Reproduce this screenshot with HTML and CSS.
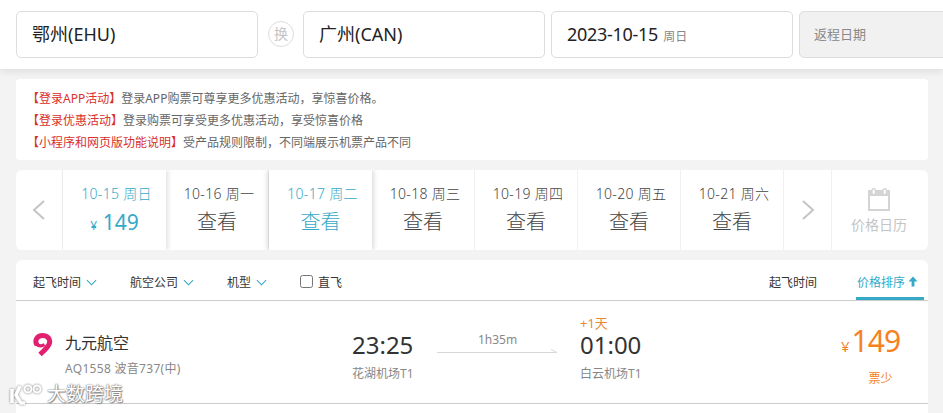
FILE: index.html
```html
<!DOCTYPE html>
<html lang="zh-CN">
<head>
    <meta charset="UTF-8">
    <title>机票查询</title>
    <link rel="stylesheet" href="styles.css">
</head>
<body>
    <header class="search-bar">
        <div class="field field-city">鄂州(EHU)</div>
        <div class="swap">换</div>
        <div class="field field-city">广州(CAN)</div>
        <div class="field field-date">2023-10-15 <span class="weekday">周日</span></div>
        <div class="field field-return">返程日期</div>
    </header>

    <main class="content">
        <section class="notice">
            <p><span class="notice-tag">【登录APP活动】</span>登录APP购票可尊享更多优惠活动，享惊喜价格。</p>
            <p><span class="notice-tag">【登录优惠活动】</span>登录购票可享受更多优惠活动，享受惊喜价格</p>
            <p><span class="notice-tag">【小程序和网页版功能说明】</span>受产品规则限制，不同端展示机票产品不同</p>
        </section>

        <section class="date-strip">
            <div class="arrow">
                <svg width="14" height="20" viewBox="0 0 14 20"><path d="M12 1 L2 10 L12 19" fill="none" stroke="#c4c4c4" stroke-width="2"/></svg>
            </div>
            <div class="day day-active"><div class="day-date">10-15 周日</div><div class="day-price"><small>¥</small> 149</div></div>
            <div class="day"><div class="day-date">10-16 周一</div><div class="day-look">查看</div></div>
            <div class="day day-active day-raised"><div class="day-date">10-17 周二</div><div class="day-look">查看</div></div>
            <div class="day"><div class="day-date">10-18 周三</div><div class="day-look">查看</div></div>
            <div class="day"><div class="day-date">10-19 周四</div><div class="day-look">查看</div></div>
            <div class="day"><div class="day-date">10-20 周五</div><div class="day-look">查看</div></div>
            <div class="day"><div class="day-date">10-21 周六</div><div class="day-look">查看</div></div>
            <div class="arrow arrow-next">
                <svg width="14" height="20" viewBox="0 0 14 20"><path d="M2 1 L12 10 L2 19" fill="none" stroke="#c4c4c4" stroke-width="2"/></svg>
            </div>
            <div class="calendar">
                <svg width="22" height="23" viewBox="0 0 22 23">
                    <rect x="1" y="3" width="20" height="19" fill="none" stroke="#d4d4d4" stroke-width="2"/>
                    <rect x="0" y="2" width="22" height="6" fill="#d4d4d4"/>
                    <rect x="4" y="0.8" width="3.4" height="6" rx="1.7" fill="#ffffff" stroke="#d4d4d4" stroke-width="1.4"/>
                    <rect x="15" y="0.8" width="3.4" height="6" rx="1.7" fill="#ffffff" stroke="#d4d4d4" stroke-width="1.4"/>
                </svg>
                <span>价格日历</span>
            </div>
        </section>

        <section class="results">
            <div class="filters">
                <div class="filter-left">
                    <span class="filter filter-time">起飞时间<i class="chevron"></i></span>
                    <span class="filter filter-air">航空公司<i class="chevron"></i></span>
                    <span class="filter filter-type">机型<i class="chevron"></i></span>
                    <label class="direct"><input type="checkbox"> 直飞</label>
                </div>
                <div class="sort-right">
                    <span class="sort">起飞时间</span>
                    <span class="sort sort-on">价格排序
                        <svg width="10" height="11" viewBox="0 0 9 10"><path d="M4.5 0.5 L8.6 5 H5.8 V9.5 H3.2 V5 H0.4 Z" fill="#35a9c7"/></svg>
                    </span>
                </div>
            </div>

            <div class="flight">
                <div class="airline">
                    <svg class="airline-logo" width="21" height="24" viewBox="0 0 21 24">
                        <path d="M5 12 C2 7 5.500 2.500 10.500 2.500 C15.500 2.500 18.500 6 17.500 10 C17 13 13 17 8 21.500" fill="none" stroke="#e2206f" stroke-width="5"/>
                        <path d="M4 11 Q8 14.500 12.500 11.500" fill="none" stroke="#e2206f" stroke-width="3"/>
                    </svg>
                    <div>
                        <div class="airline-name">九元航空</div>
                        <div class="airline-no">AQ1558 波音737(中)</div>
                    </div>
                </div>
                <div class="stop stop-from">
                    <div class="stop-time">23:25</div>
                    <div class="stop-port">花湖机场T1</div>
                </div>
                <div class="duration">
                    <span>1h35m</span>
                    <svg width="121" height="6" viewBox="0 0 121 6"><path d="M0 3.500 H120 L114 0.500" fill="none" stroke="#d8d8d8"/></svg>
                </div>
                <div class="stop">
                    <div class="plus-day">+1天</div>
                    <div class="stop-time">01:00</div>
                    <div class="stop-port">白云机场T1</div>
                </div>
                <div class="price">
                    <div class="price-num"><small>¥</small>149</div>
                    <div class="price-note">票少</div>
                </div>
            </div>
        </section>
    </main>

    <div class="watermark">
        <svg width="34" height="22" viewBox="0 0 34 22">
            <path d="M3 6 V20 M11 3 L7 12 L12 20 H16" fill="none" stroke="#ffffff" stroke-width="3.500"/>
            <circle cx="19" cy="6" r="3.500" fill="none" stroke="#ffffff" stroke-width="2"/>
            <circle cx="28" cy="6" r="3.500" fill="none" stroke="#ffffff" stroke-width="2"/>
        </svg>
        <span>大数跨境</span>
    </div>
</body>
</html>
```

FILE: styles.css
```css
* {
    box-sizing: border-box;
}

html, body {
    height: 413px;
    overflow: hidden;
}

body {
    margin: 0;
    width: 943px;
    background-color: #f3f3f3;
    font-family: "Noto Sans", "Noto Sans CJK SC", sans-serif;
    color: #333333;
    position: relative;
}

p {
    margin: 0;
}

/* top search */
.search-bar {
    height: 69px;
    background-color: #ffffff;
    box-shadow: 0 2px 8px rgba(0, 0, 0, 0.1);
    display: flex;
    align-items: flex-start;
    padding: 11px 0 0 16px;
    overflow: hidden;
}

.field {
    flex: none;
    height: 47px;
    line-height: 45px;
    border: 1px solid #dddddd;
    border-radius: 5px;
    padding-left: 15px;
    font-size: 18px;
    color: #222222;
    white-space: nowrap;
}

.field-city {
    width: 242px;
}

.field-date {
    width: 242px;
    margin-left: 6px;
    letter-spacing: -0.3px;
}

.weekday {
    font-size: 12px;
    margin-left: 1px;
    color: #888888;
    letter-spacing: 0;
}

.field-return {
    width: 160px;
    margin-left: 6px;
    padding-left: 14px;
    background-color: #f1f1f1;
    font-size: 13px;
    color: #888888;
}

.swap {
    flex: none;
    width: 26px;
    height: 26px;
    line-height: 24px;
    margin: 10px 9px 0 10px;
    border: 1px solid #dddddd;
    border-radius: 50%;
    text-align: center;
    font-size: 14px;
    color: #c4c4c4;
}

.content {
    width: 912px;
    margin-left: 16px;
    padding-top: 10px;
}

/* notice */
.notice {
    height: 81px;
    background-color: #ffffff;
    border-radius: 4px;
    padding: 9px 11px;
    font-size: 12px;
    line-height: 22px;
    color: #666666;
}

.notice-tag {
    color: #d9302a;
}

/* date strip */
.date-strip {
    height: 80px;
    margin-top: 10px;
    background-color: #ffffff;
    border-radius: 6px;
    display: flex;
    overflow: hidden;
}

.arrow {
    flex: none;
    width: 47px;
    display: flex;
    align-items: center;
    justify-content: center;
    border-right: 1px solid #f0f0f0;
}

.arrow-next {
    width: 48px;
    border-right: 1px solid #f0f0f0;
}

.day {
    flex: none;
    width: 103px;
    text-align: center;
    border-right: 1px solid #f0f0f0;
    padding-top: 14px;
    color: #444444;
}

.day-active {
    color: #35a9c7;
    border-right: none;
    box-shadow: 2px 0 5px rgba(0, 0, 0, 0.12);
}

.day-raised {
    box-shadow: -2px 0 5px rgba(0, 0, 0, 0.12), 2px 0 5px rgba(0, 0, 0, 0.12);
}

.day-date {
    font-size: 14px;
    line-height: 20px;
    letter-spacing: 0.3px;
    font-weight: 300;
    padding-left: 4px;
}

.day-look {
    font-size: 20px;
    line-height: 30px;
    margin-top: 3px;
    font-weight: 300;
}

.day-price {
    font-size: 21px;
    line-height: 30px;
    margin-top: 3px;
}

.day-price small {
    font-size: 12px;
}

.calendar {
    flex: 1;
    display: flex;
    flex-direction: column;
    align-items: center;
    padding: 18px 2px 0 0;
    font-size: 14px;
    color: #c4c4c4;
}

.calendar span {
    margin-top: 3px;
}

/* results */
.results {
    margin-top: 10px;
    background-color: #ffffff;
    border-radius: 6px 6px 0 0;
    height: 153px;
}

.filters {
    height: 41px;
    border-bottom: 1px solid #cccccc;
    display: flex;
    justify-content: space-between;
    font-size: 12px;
}

.filter-left {
    display: flex;
    align-items: center;
    padding: 3px 0 0 17px;
}

.filter-time {
    width: 97px;
}

.filter-air {
    width: 97px;
}

.filter-type {
    width: 73px;
}

.chevron {
    display: inline-block;
    width: 7px;
    height: 7px;
    margin: 0 0 3px 7px;
    border-right: 1px solid #35a9c7;
    border-bottom: 1px solid #35a9c7;
    transform: rotate(45deg);
}

.direct {
    display: flex;
    align-items: center;
    gap: 5px;
}

.direct input {
    width: 13px;
    height: 13px;
    margin: 0;
}

.sort-right {
    display: flex;
    padding-right: 4px;
}

.sort {
    line-height: 46px;
    white-space: nowrap;
}

.sort-on {
    width: 68px;
    margin-left: 39px;
    height: 40px;
    padding-left: 1px;
    color: #35a9c7;
    border-bottom: 3px solid #35a9c7;
}

.flight {
    height: 103px;
    border-bottom: 1px solid #cccccc;
    display: flex;
    align-items: center;
    position: relative;
}

.airline {
    width: 336px;
    display: flex;
    align-items: center;
    gap: 12px;
    padding: 7px 0 0 16px;
}

.airline-logo {
    margin-top: -22px;
}

.airline-name {
    font-size: 16px;
    line-height: 22px;
}

.airline-no {
    font-size: 12px;
    line-height: 20px;
    margin-top: 5px;
    color: #888888;
    letter-spacing: 0.3px;
}

.stop {
    width: 64px;
    white-space: nowrap;
    position: relative;
    padding-top: 7px;
}

.stop-time {
    font-size: 24px;
    line-height: 32px;
}

.stop-port {
    font-size: 12px;
    line-height: 18px;
    margin-top: 4px;
    color: #888888;
}

.plus-day {
    position: absolute;
    top: -9px;
    left: 0;
    font-size: 13px;
    color: #e88a2e;
}

.duration {
    width: 164px;
    padding: 0 0 0 21px;
    margin-top: -19px;
    font-size: 12px;
    color: #888888;
}

.duration span {
    display: block;
    width: 121px;
    text-align: center;
    line-height: 17px;
}

.duration svg {
    display: block;
    margin-top: 1px;
}

.price {
    margin-left: 197px;
    padding-top: 7px;
    text-align: center;
    color: #f5821f;
}

.price-num {
    font-size: 30px;
    line-height: 36px;
    letter-spacing: -1px;
}

.price-num small {
    font-size: 15px;
    margin-right: 2px;
    letter-spacing: 0;
}

.price-note {
    font-size: 12px;
    line-height: 18px;
    margin-top: 6px;
    padding-left: 20px;
}

/* logo stamped over the corner of the shot */
.watermark {
    position: absolute;
    left: 9px;
    bottom: 8px;
    display: flex;
    align-items: center;
    gap: 4px;
    font-size: 19px;
    line-height: 22px;
    color: #ffffff;
    text-shadow: 0 0 2px #777777, 0 0 1px #777777, 1px 1px 1px #999999;
}

.watermark svg {
    filter: drop-shadow(0 0 1px #777777);
}
```
